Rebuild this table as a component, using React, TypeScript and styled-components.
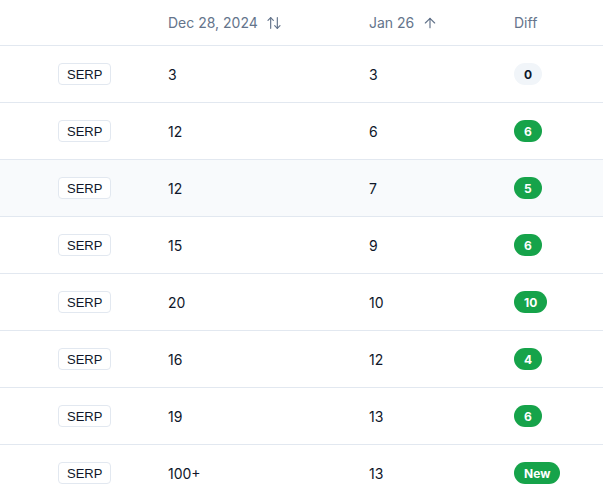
import React from "react";
import styled, { createGlobalStyle } from "styled-components";
import { ArrowUpDown, ArrowUp } from "lucide-react";

const Global = createGlobalStyle`
  html, body { margin: 0; padding: 0; background: #ffffff; }
  body { font-family: Inter, "Noto Sans", sans-serif; -webkit-font-smoothing: antialiased; }
`;

const Table = styled.div`
  width: 603px;
  display: flex;
  flex-direction: column;
`;

const Row = styled.div<{ $head?: boolean; $hover?: boolean }>`
  display: grid;
  grid-template-columns: 168px 201px 145px 1fr;
  align-items: center;
  height: ${(p) => (p.$head ? "45px" : "56px")};
  border-bottom: 1px solid #e2e8f0;
  background: ${(p) => (p.$hover ? "#f8fafc" : "transparent")};
  &:last-child { border-bottom: none; }
`;

const HeadCell = styled.div`
  display: flex;
  align-items: center;
  gap: 8px;
  font-size: 14px;
  color: #64748b;
  font-weight: 400;
  svg { color: #64748b; }
`;

const Cell = styled.div`
  font-size: 14px;
  color: #0f172a;
`;

const TypeCell = styled.div`
  padding-left: 58px;
  display: flex;
`;

const TypeTag = styled.span`
  display: inline-flex;
  align-items: center;
  height: 20px;
  padding: 0 8px;
  border: 1px solid #e2e8f0;
  border-radius: 4px;
  font-family: "Liberation Sans", Arial, sans-serif;
  font-size: 13px;
  color: #0f172a;
  background: #ffffff;
`;

const DiffBadge = styled.span<{ $zero?: boolean }>`
  display: inline-flex;
  align-items: center;
  justify-content: center;
  height: 22px;
  padding: 0 10px;
  border-radius: 9999px;
  font-size: 12px;
  font-weight: 700;
  background: ${(p) => (p.$zero ? "#f1f5f9" : "#16a34a")};
  color: ${(p) => (p.$zero ? "#0f172a" : "#ffffff")};
`;

const rows = [
  { a: "3", b: "3", d: "0" },
  { a: "12", b: "6", d: "6" },
  { a: "12", b: "7", d: "5", hover: true },
  { a: "15", b: "9", d: "6" },
  { a: "20", b: "10", d: "10" },
  { a: "16", b: "12", d: "4" },
  { a: "19", b: "13", d: "6" },
  { a: "100+", b: "13", d: "New" },
];

export default function App() {
  return (
    <>
      <Global />
      <Table>
        <Row $head>
          <div />
          <HeadCell>
            Dec 28, 2024 <ArrowUpDown size={16} strokeWidth={1.75} />
          </HeadCell>
          <HeadCell>
            Jan 26 <ArrowUp size={16} strokeWidth={1.75} />
          </HeadCell>
          <HeadCell>Diff</HeadCell>
        </Row>
        {rows.map((r, i) => (
          <Row key={i} $hover={r.hover}>
            <TypeCell>
              <TypeTag>SERP</TypeTag>
            </TypeCell>
            <Cell>{r.a}</Cell>
            <Cell>{r.b}</Cell>
            <Cell>
              <DiffBadge $zero={r.d === "0"}>{r.d}</DiffBadge>
            </Cell>
          </Row>
        ))}
      </Table>
    </>
  );
}
